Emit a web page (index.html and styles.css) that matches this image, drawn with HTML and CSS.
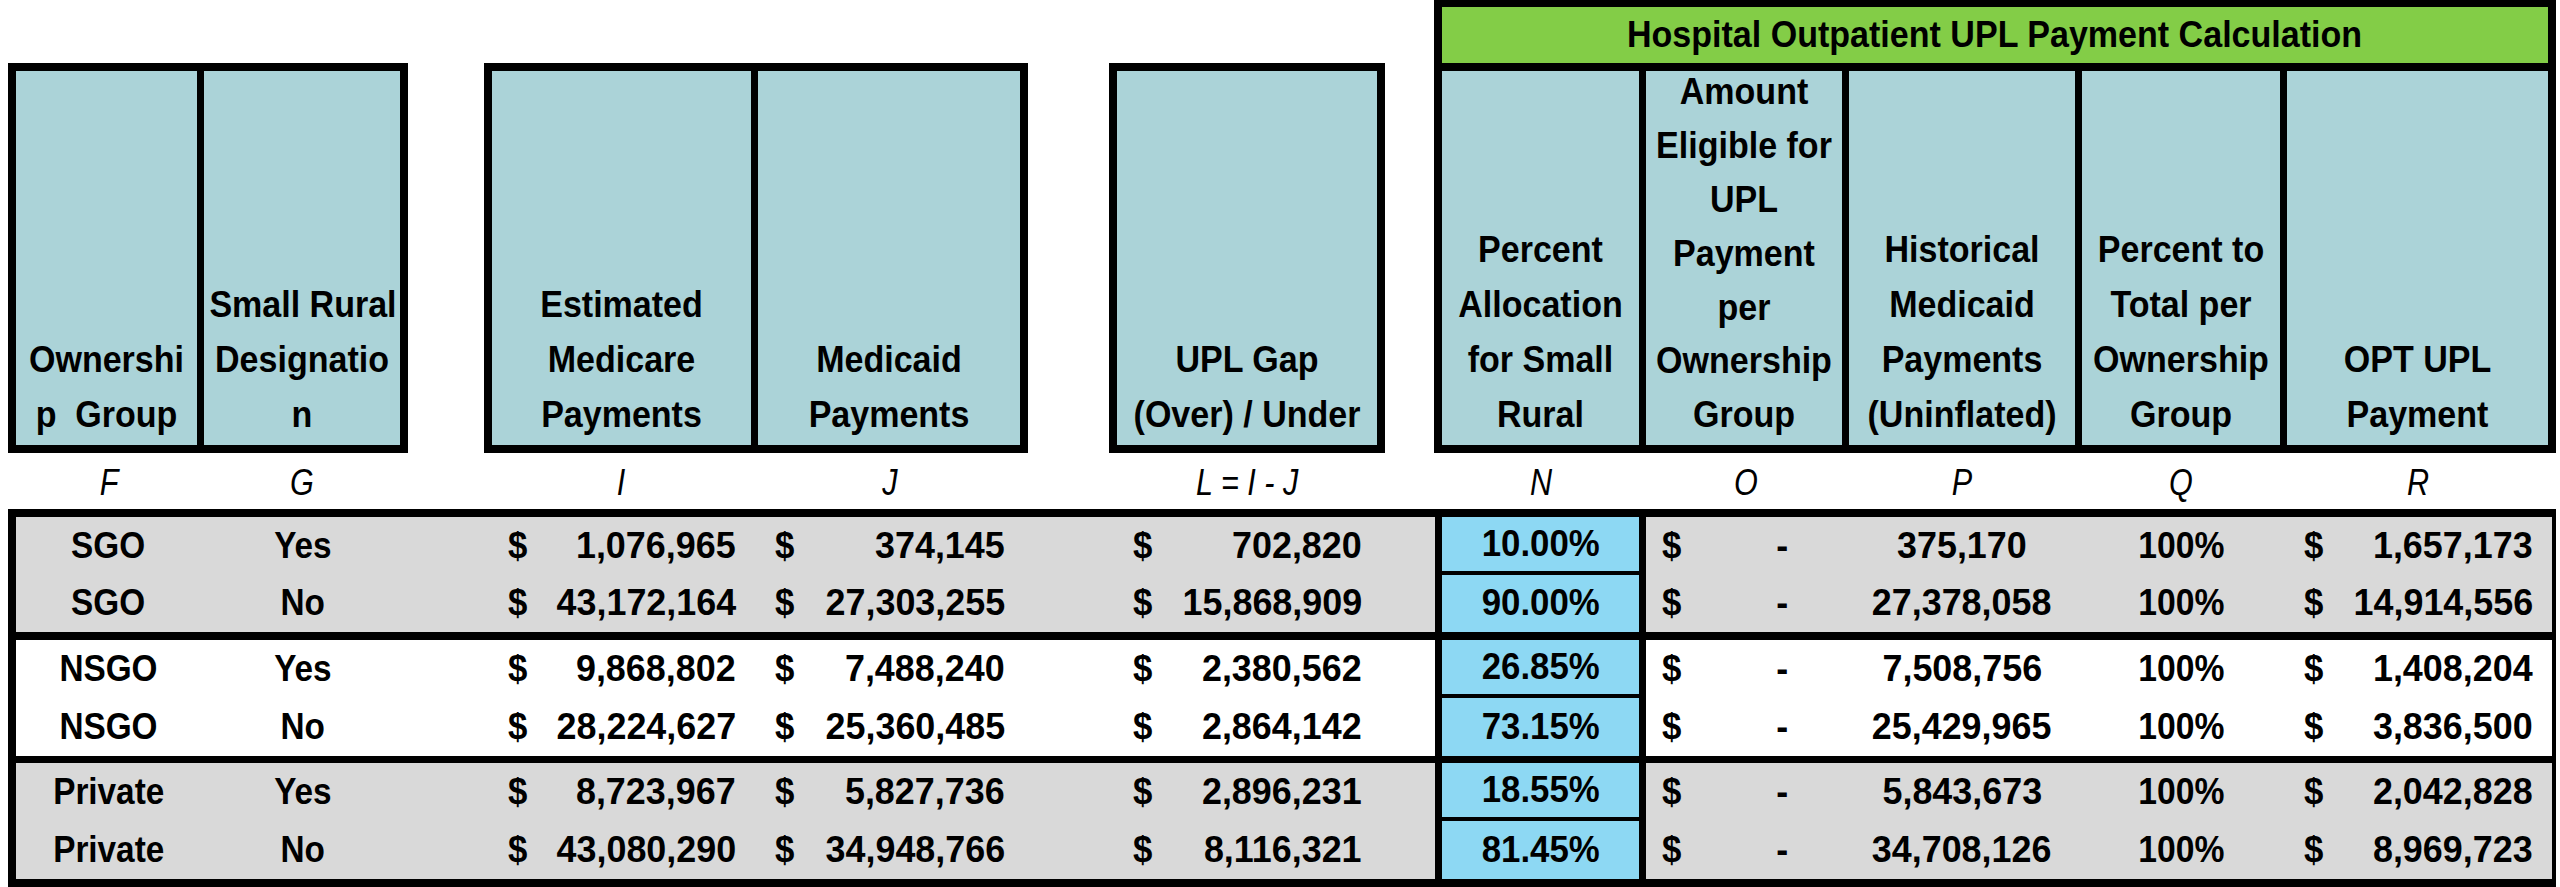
FILE: index.html
```html
<!DOCTYPE html>
<html>
<head>
<meta charset="utf-8">
<title>Hospital Outpatient UPL Payment Calculation</title>
<link rel="stylesheet" href="styles.css">
</head>
<body>
<div class="sheet">
  <div class="heads">
    <div class="box box-fg">
      <div class="hc w-f"><span class="ht">Ownershi<br>p&nbsp; Group</span></div>
      <div class="hc w-g sep"><span class="ht">Small Rural<br>Designatio<br>n</span></div>
    </div>
    <div class="box box-ij">
      <div class="hc w-i"><span class="ht">Estimated<br>Medicare<br>Payments</span></div>
      <div class="hc w-j sep"><span class="ht">Medicaid<br>Payments</span></div>
    </div>
    <div class="box box-l">
      <div class="hc w-l"><span class="ht">UPL Gap<br>(Over) / Under</span></div>
    </div>
    <div class="box box-opt">
      <div class="title"><span class="tt">Hospital Outpatient UPL Payment Calculation</span></div>
      <div class="hrow">
        <div class="hc w-n"><span class="ht">Percent<br>Allocation<br>for Small<br>Rural</span></div>
        <div class="hc w-o sep"><span class="ht">Amount<br>Eligible for<br>UPL<br>Payment<br>per<br>Ownership<br>Group</span></div>
        <div class="hc w-p sep"><span class="ht">Historical<br>Medicaid<br>Payments<br>(Uninflated)</span></div>
        <div class="hc w-q sep"><span class="ht">Percent to<br>Total per<br>Ownership<br>Group</span></div>
        <div class="hc w-r sep"><span class="ht">OPT UPL<br>Payment</span></div>
      </div>
    </div>
  </div>

  <div class="letters cols">
    <span class="l"><i>F</i></span><span class="l"><i>G</i></span><span class="l"></span><span class="l"><i>I</i></span><span class="l"><i>J</i></span><span class="l"></span><span class="l"><i>L = I - J</i></span><span class="l"></span><span class="l"><i>N</i></span><span class="l"><i>O</i></span><span class="l"><i>P</i></span><span class="l"><i>Q</i></span><span class="l"><i>R</i></span>
  </div>

  <div class="data">
    <div class="group shade g1">
      <div class="row cols">
        <div class="c"><b class="w">SGO</b></div><div class="c"><b class="w">Yes</b></div><div class="c"></div>
        <div class="c acc"><b class="d">$</b><b class="n">1,076,965</b></div>
        <div class="c acc"><b class="d">$</b><b class="n">374,145</b></div><div class="c"></div>
        <div class="c acc"><b class="d">$</b><b class="n">702,820</b></div><div class="c"></div>
        <div class="c pct top"><b class="p">10.00%</b></div>
        <div class="c acc zero"><b class="d">$</b><b class="n">-</b></div>
        <div class="c"><b class="n">375,170</b></div><div class="c"><b class="h">100%</b></div>
        <div class="c acc"><b class="d">$</b><b class="n">1,657,173</b></div>
      </div>
      <div class="row cols">
        <div class="c"><b class="w">SGO</b></div><div class="c"><b class="w">No</b></div><div class="c"></div>
        <div class="c acc"><b class="d">$</b><b class="n">43,172,164</b></div>
        <div class="c acc"><b class="d">$</b><b class="n">27,303,255</b></div><div class="c"></div>
        <div class="c acc"><b class="d">$</b><b class="n">15,868,909</b></div><div class="c"></div>
        <div class="c pct"><b class="p">90.00%</b></div>
        <div class="c acc zero"><b class="d">$</b><b class="n">-</b></div>
        <div class="c"><b class="n">27,378,058</b></div><div class="c"><b class="h">100%</b></div>
        <div class="c acc"><b class="d">$</b><b class="n">14,914,556</b></div>
      </div>
    </div>
    <div class="group g2">
      <div class="row cols">
        <div class="c"><b class="w">NSGO</b></div><div class="c"><b class="w">Yes</b></div><div class="c"></div>
        <div class="c acc"><b class="d">$</b><b class="n">9,868,802</b></div>
        <div class="c acc"><b class="d">$</b><b class="n">7,488,240</b></div><div class="c"></div>
        <div class="c acc"><b class="d">$</b><b class="n">2,380,562</b></div><div class="c"></div>
        <div class="c pct top"><b class="p">26.85%</b></div>
        <div class="c acc zero"><b class="d">$</b><b class="n">-</b></div>
        <div class="c"><b class="n">7,508,756</b></div><div class="c"><b class="h">100%</b></div>
        <div class="c acc"><b class="d">$</b><b class="n">1,408,204</b></div>
      </div>
      <div class="row cols">
        <div class="c"><b class="w">NSGO</b></div><div class="c"><b class="w">No</b></div><div class="c"></div>
        <div class="c acc"><b class="d">$</b><b class="n">28,224,627</b></div>
        <div class="c acc"><b class="d">$</b><b class="n">25,360,485</b></div><div class="c"></div>
        <div class="c acc"><b class="d">$</b><b class="n">2,864,142</b></div><div class="c"></div>
        <div class="c pct"><b class="p">73.15%</b></div>
        <div class="c acc zero"><b class="d">$</b><b class="n">-</b></div>
        <div class="c"><b class="n">25,429,965</b></div><div class="c"><b class="h">100%</b></div>
        <div class="c acc"><b class="d">$</b><b class="n">3,836,500</b></div>
      </div>
    </div>
    <div class="group shade g3">
      <div class="row cols">
        <div class="c"><b class="w">Private</b></div><div class="c"><b class="w">Yes</b></div><div class="c"></div>
        <div class="c acc"><b class="d">$</b><b class="n">8,723,967</b></div>
        <div class="c acc"><b class="d">$</b><b class="n">5,827,736</b></div><div class="c"></div>
        <div class="c acc"><b class="d">$</b><b class="n">2,896,231</b></div><div class="c"></div>
        <div class="c pct top"><b class="p">18.55%</b></div>
        <div class="c acc zero"><b class="d">$</b><b class="n">-</b></div>
        <div class="c"><b class="n">5,843,673</b></div><div class="c"><b class="h">100%</b></div>
        <div class="c acc"><b class="d">$</b><b class="n">2,042,828</b></div>
      </div>
      <div class="row cols">
        <div class="c"><b class="w">Private</b></div><div class="c"><b class="w">No</b></div><div class="c"></div>
        <div class="c acc"><b class="d">$</b><b class="n">43,080,290</b></div>
        <div class="c acc"><b class="d">$</b><b class="n">34,948,766</b></div><div class="c"></div>
        <div class="c acc"><b class="d">$</b><b class="n">8,116,321</b></div><div class="c"></div>
        <div class="c pct"><b class="p">81.45%</b></div>
        <div class="c acc zero"><b class="d">$</b><b class="n">-</b></div>
        <div class="c"><b class="n">34,708,126</b></div><div class="c"><b class="h">100%</b></div>
        <div class="c acc"><b class="d">$</b><b class="n">8,969,723</b></div>
      </div>
    </div>
  </div>
</div>
</body>
</html>
```

FILE: styles.css
```css
html, body {
  margin: 0;
  padding: 0;
  background: #ffffff;
}

body {
  font-family: "Liberation Sans", Arial, sans-serif;
  color: #000;
}

.sheet {
  width: 2560px;
  height: 887px;
  overflow: hidden;
}

/* ---------- header boxes ---------- */
.heads {
  display: flex;
  align-items: flex-end;
  height: 453px;
  padding-left: 8px;
}

.box {
  box-sizing: border-box;
  display: flex;
  border: 8px solid #000;
  background: #abd3d8;
}

.box-fg { width: 400px; height: 390px; }
.box-ij { width: 544px; height: 390px; margin-left: 76px; }
.box-l  { width: 276px; height: 390px; margin-left: 81px; }

.box-opt {
  width: 1122px;
  height: 453px;
  margin-left: 49px;
  flex-direction: column;
  border-top-width: 7px;
}

.title {
  height: 56px;
  background: #83cd47;
  border-bottom: 8px solid #000;
  text-align: center;
  line-height: 56px;
  font-size: 37px;
  font-weight: 700;
  white-space: nowrap;
}

.tt {
  display: inline-block;
  transform: scaleX(0.92);
}

.hrow {
  display: flex;
  flex: 1;
  min-height: 0;
}

.hc {
  box-sizing: border-box;
  display: flex;
  flex-direction: column;
  justify-content: flex-end;
  padding-bottom: 3px;
  text-align: center;
  line-height: 55px;
  font-size: 36px;
  font-weight: 700;
  white-space: nowrap;
  overflow: hidden;
  flex: none;
}

.ht {
  display: block;
  transform: scaleX(0.945);
}

.hc.sep { border-left: 7px solid #000; }

.w-f { width: 181px; }
.w-g { width: 203px; }
.w-i { width: 259px; }
.w-j { width: 269px; }
.w-l { width: 260px; }
.w-n { width: 197px; }
.w-o { width: 203px; line-height: 53.8px; }
.w-p { width: 233px; }
.w-q { width: 205px; }
.w-r { width: 268px; }

/* ---------- shared column grid ---------- */
.cols {
  display: grid;
  grid-template-columns: 185px 203px 84px 267px 269px 89px 268px 54px 211px 200px 232px 206px 268px;
}

.letters {
  box-sizing: border-box;
  height: 56px;
  padding: 3px 0 0 16px;
  font-size: 36px;
  line-height: 53px;
}

.l {
  text-align: center;
}

.l i {
  display: inline-block;
  font-style: italic;
  font-weight: 400;
  transform: scaleX(0.85);
}

/* ---------- data table ---------- */
.data {
  width: 2548px;
  box-sizing: border-box;
  margin-left: 8px;
  border: 8px solid #000;
  border-right-width: 4px;
}

.group { background: #ffffff; }
.group.shade { background: #d9d9d9; }
.g2 { border-top: 8px solid #000; }
.g3 { border-top: 7px solid #000; }

.row { height: 58px; }
.g1 .row { height: 57.5px; }

.c {
  box-sizing: border-box;
  display: flex;
  align-items: center;
  justify-content: center;
  font-size: 37px;
  font-weight: 700;
  white-space: nowrap;
}

.c b {
  display: inline-block;
  font-weight: 700;
}

.c b.w { transform: scaleX(0.9); }
.c b.n { transform: scaleX(0.97); }
.c b.d { transform: scaleX(0.94); }
.c b.p { transform: scaleX(0.94); }
.c b.h { transform: scaleX(0.91); }

.c.acc {
  justify-content: space-between;
  padding: 0 19px 0 20px;
}

.c.acc b:first-child { transform-origin: left center; }
.c.acc b:last-child { transform-origin: right center; }

.c.zero { padding: 0 58px 0 16px; }

.c.pct {
  background: #8dd8f3;
  border-left: 7px solid #000;
  border-right: 7px solid #000;
}

.c.pct.top { border-bottom: 4px solid #000; }
```
